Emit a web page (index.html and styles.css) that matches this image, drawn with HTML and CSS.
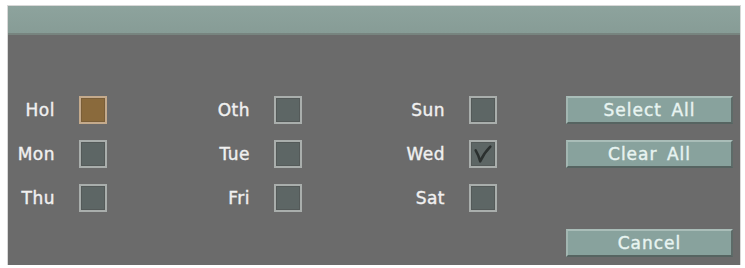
FILE: index.html
```html
<!DOCTYPE html>
<html>
<head>
<meta charset="utf-8">
<link rel="stylesheet" href="styles.css">
</head>
<body>
<div class="dialog">
  <div class="titlebar"></div>
  <div class="content">
    <span class="lbl">Hol</span><span class="box hol"></span>
    <span class="lbl">Oth</span><span class="box"></span>
    <span class="lbl">Sun</span><span class="box"></span>
    <button class="btn">Select All</button>

    <span class="lbl">Mon</span><span class="box"></span>
    <span class="lbl">Tue</span><span class="box"></span>
    <span class="lbl">Wed</span><span class="box checked"><svg viewBox="0 0 24 24" class="tick"><path d="M4 8 Q7 13 9 20 Q13 11 20 4" fill="none" stroke="#2b302f" stroke-width="2.8" stroke-linecap="round" stroke-linejoin="round"/></svg></span>
    <button class="btn">Clear All</button>

    <span class="lbl">Thu</span><span class="box"></span>
    <span class="lbl">Fri</span><span class="box"></span>
    <span class="lbl">Sat</span><span class="box"></span>
    <span></span>

    <button class="btn cancel">Cancel</button>
  </div>
</div>
</body>
</html>
```
FILE: styles.css
```css
html, body {
  margin: 0;
  padding: 0;
  background: #ffffff;
}
body {
  font-family: "DejaVu Sans", "Liberation Sans", sans-serif;
}
.dialog {
  margin: 6px 0 0 8px;
  width: 732px;
  height: 259px;
  background: #6b6b6b;
  box-shadow: 0 0 0 1px #d8d8d8;
  display: flex;
  flex-direction: column;
}
.titlebar {
  height: 27px;
  background: linear-gradient(#8da39d, #879c96);
  border-bottom: 2px solid #77847f;
}
.content {
  display: grid;
  grid-template-columns: 71px 28px 167px 28px 167px 28px 1fr;
  grid-template-rows: 28px 28px 28px 28px;
  row-gap: 16px;
  padding-top: 61px;
  align-items: center;
}
.lbl {
  justify-self: end;
  padding-right: 24px;
  color: #f0f0f0;
  font-size: 17px;
  letter-spacing: 0.5px;
  line-height: 28px;
  -webkit-text-stroke: 0.4px #f0f0f0;
}
.box {
  width: 28px;
  height: 28px;
  box-sizing: border-box;
  border: 2px solid #a9aeac;
  background: #5d6665;
  box-shadow: inset 0 0 0 1px #545a59;
  display: flex;
  align-items: center;
  justify-content: center;
}
.box.hol {
  background: #8a6a3c;
  border-color: #c4aa8c;
  box-shadow: inset 0 0 0 1px #7a5e38;
}
.tick {
  width: 22px;
  height: 22px;
}
.btn {
  grid-column: 7;
  margin: 0 7px 0 69px;
  height: 28px;
  box-sizing: border-box;
  background: #88a29d;
  border: none;
  border-top: 2px solid #a9bdb8;
  border-left: 2px solid #a2b6b1;
  border-bottom: 2px solid #566461;
  border-right: 2px solid #5d6b68;
  color: #e8f4f1;
  font-family: "DejaVu Sans", "Liberation Sans", sans-serif;
  font-size: 17px;
  letter-spacing: 1px;
  word-spacing: 3px;
  padding: 0;
  line-height: 22px;
  -webkit-text-stroke: 0.4px #e8f4f1;
}
.cancel {
  grid-row: 4;
  margin-top: 1px;
}
```
